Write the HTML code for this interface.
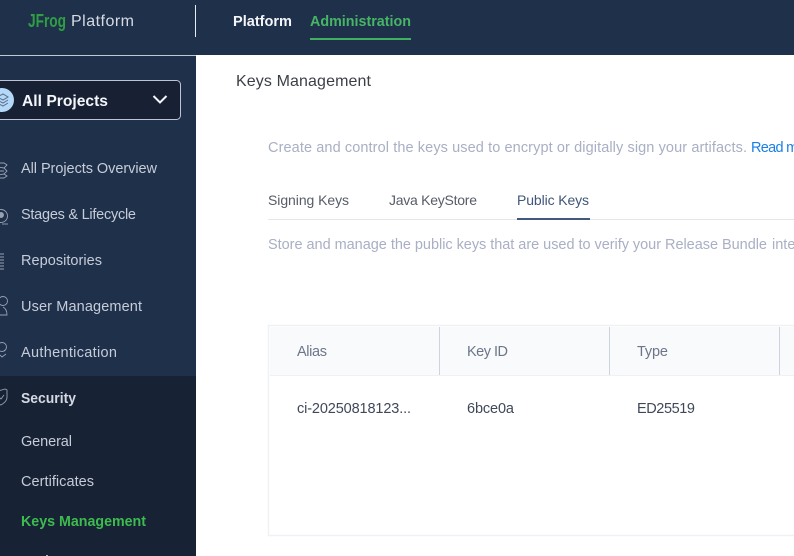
<!DOCTYPE html>
<html><head><meta charset="utf-8"><style>
html,body{margin:0;padding:0;background:#fff;width:794px;height:556px;overflow:hidden}
svg{display:block}
text{font-family:"Liberation Sans",sans-serif;font-size:14.5px}
.n{fill:#c6ccd8}
.d{fill:#a9afc4}
.h{fill:#6d7689}
.r{fill:#3f4859}
.t{font-size:14px}
</style></head><body>
<svg width="794" height="556" viewBox="0 0 794 556" xmlns="http://www.w3.org/2000/svg">
<rect width="794" height="556" fill="#fff"/>
<rect width="794" height="55" fill="#1f304a"/>
<rect y="55" width="196" height="501" fill="#1f304a"/>
<rect y="55" width="196" height="1" fill="#c3c8d0"/>
<rect y="376" width="196" height="180" fill="#172235"/>
<rect x="195" y="5" width="1" height="32" fill="#e8ebf0"/>
<text x="28" y="27" font-weight="700" fill="#2f9e44" style="font-size:18px" textLength="38" lengthAdjust="spacingAndGlyphs">JFrog</text>
<text x="71" y="26" fill="#d6dbe3" style="font-size:16px" textLength="63">Platform</text>
<text x="233" y="26" font-weight="700" fill="#f4f5f8" textLength="59" lengthAdjust="spacingAndGlyphs">Platform</text>
<text x="310" y="26" font-weight="700" fill="#46b565" textLength="101" lengthAdjust="spacingAndGlyphs">Administration</text>
<rect x="310" y="38" width="101" height="2" fill="#3fb05f"/>

<rect x="-10" y="80.500" width="190.500" height="39" rx="4" fill="#172133" stroke="#bcc4d4"/>
<circle cx="2" cy="100" r="12" fill="#b4d8f8"/>
<g fill="none" stroke="#5a6c88" stroke-width="1">
<path d="M-3 97l6-3 5 3-5 3z"/><path d="M-3 100l6 3 5-3"/><path d="M-3 103l6 3 5-3"/>
</g>
<text x="22" y="106" font-weight="700" fill="#f4f6fa" style="font-size:16px" textLength="86" lengthAdjust="spacingAndGlyphs">All Projects</text>
<path d="M153.500 96l6.500 6.500 6.500-6.500" fill="none" stroke="#f4f6fa" stroke-width="2"/>

<g fill="none" stroke="#98a1b2" stroke-width="0.900">
<path d="M-2 163l6 0 3 2-3 3 3 3-3 3 3 2-3 2-6 0"/><path d="M-2 167l6 1M-2 171l6 0M-2 175l6-1"/>
<circle cx="1" cy="216" r="6.500"/><circle cx="1" cy="215" r="2.500" fill="#98a1b2"/><path d="M2 224h6"/>
<path d="M-1 254h5M-1 257h5M-1 260h5M-1 263h5M-1 266h5M-1 269h5"/>
<circle cx="3" cy="301" r="4.500"/><path d="M-3 315h10c0-5-2-7-4-8"/>
<circle cx="2" cy="347" r="4.500"/><path d="M5 351l-1-1M0 355l2 2 4-3"/>
<path d="M-4 391c3 0 6-1 9-2l2 1v7c0 4-3 6-6 8-2-1-5-3-7-6"/><path d="M-1 397l2 2 3-4"/>
</g>
<text class="n" x="21" y="173" textLength="136">All Projects Overview</text>
<text class="n" x="21" y="219" textLength="115">Stages &amp; Lifecycle</text>
<text class="n" x="21" y="265" textLength="81">Repositories</text>
<text class="n" x="21" y="311" textLength="121">User Management</text>
<text class="n" x="21" y="357" textLength="96">Authentication</text>
<text x="21" y="403" font-weight="700" fill="#d3d8e2" textLength="55" lengthAdjust="spacingAndGlyphs">Security</text>
<text class="n" x="21" y="446" textLength="51">General</text>
<text class="n" x="21" y="486" textLength="73">Certificates</text>
<text x="21" y="526" font-weight="700" fill="#3dbb4e" textLength="125" lengthAdjust="spacingAndGlyphs">Keys Management</text>
<rect x="46" y="555" width="2" height="1" fill="#aeb6c5"/>

<text x="236" y="86" fill="#3c3f46" style="font-size:16px" textLength="135">Keys Management</text>
<text class="d" x="268" y="152" textLength="479">Create and control the keys used to encrypt or digitally sign your artifacts.</text>
<text x="751" y="152" fill="#1a7fe8" textLength="66">Read more</text>
<text class="t" x="268" y="205" fill="#575c68" textLength="81">Signing Keys</text>
<text class="t" x="389" y="205" fill="#575c68" textLength="88">Java KeyStore</text>
<text class="t" x="517" y="205" fill="#40567a" textLength="72">Public Keys</text>
<rect x="268" y="219" width="526" height="1" fill="#e4e6ec"/>
<rect x="517" y="218" width="73" height="2" fill="#43587c"/>
<text class="d" x="268" y="249" textLength="499">Store and manage the public keys that are used to verify your Release Bundle</text>
<text class="d" x="772" y="249">integrity</text>

<rect x="268.500" y="325.500" width="530" height="210" fill="#fff" stroke="#f0f1f6" stroke-width="1.500"/>
<rect x="270" y="327" width="524" height="48" fill="#f9fafc"/>
<rect x="270" y="375" width="524" height="1" fill="#f0f1f6"/>
<rect x="439" y="327" width="1" height="48" fill="#cfd3de"/>
<rect x="609" y="327" width="1" height="48" fill="#cfd3de"/>
<rect x="779" y="327" width="1" height="48" fill="#cfd3de"/>
<text class="h" x="297" y="356" textLength="30">Alias</text>
<text class="h" x="467" y="356" textLength="41">Key ID</text>
<text class="h" x="637" y="356" textLength="31">Type</text>
<text class="r" x="297" y="413" textLength="114">ci-20250818123...</text>
<text class="r" x="467" y="413" textLength="47">6bce0a</text>
<text class="r" x="637" y="413" textLength="58">ED25519</text>
</svg>
</body></html>
